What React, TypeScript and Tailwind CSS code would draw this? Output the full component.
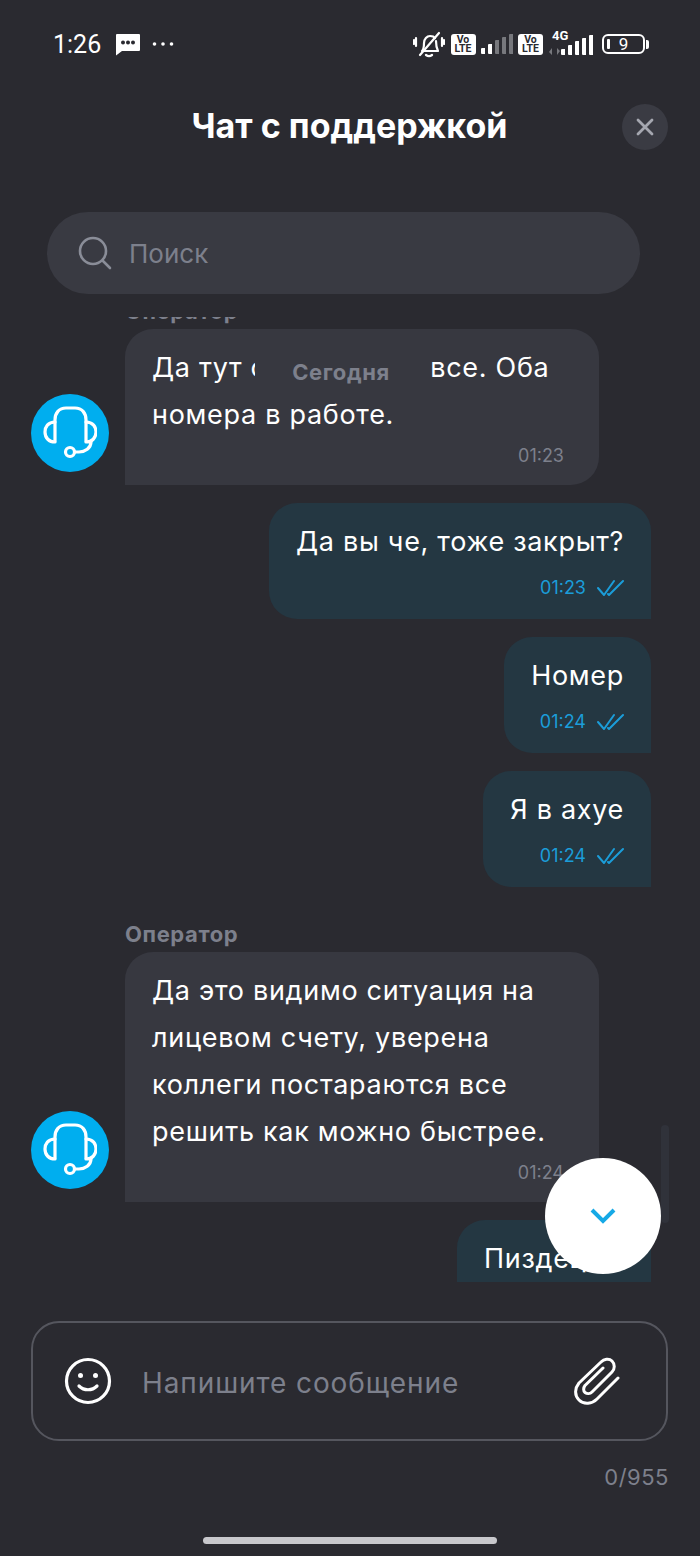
const fontMain = "font-['Inter','Noto_Sans',sans-serif]";

const HeadsetIcon = () => (
    <svg width="54" height="54" viewBox="0 0 54 54" fill="none" stroke="white" strokeWidth="3.200" strokeLinecap="round" strokeLinejoin="round">
        <path d="M12 35V14C12 7 16 2 23 2H32C39 2 43 7 43 14V35" />
        <path d="M12 16C5 16 2 21 2 26C2 32 6 36 12 36" />
        <path d="M43 16C50 16 53 21 53 26C53 32 49 36 43 36" />
        <path d="M48 36C48 42 42 46 36 46H32" />
        <circle cx="27" cy="46" r="4.500" />
    </svg>
);

const DoubleCheck = () => (
    <svg width="27" height="18" viewBox="0 0 27 18" fill="none" stroke="#1b9dd9" strokeWidth="2" strokeLinecap="round" strokeLinejoin="round">
        <path d="M1 9l6 7L17 2" />
        <path d="M11 15l1 1L26 2" />
    </svg>
);

const VoLte = () => (
    <div className="flex h-[21px] w-[25px] flex-col items-center justify-center rounded-[3px] bg-white font-['Roboto',sans-serif] text-[10.500px] leading-[9.500px] font-bold text-[#2a2a30]">
        <span>Vo</span>
        <span>LTE</span>
    </div>
);

const SignalBars = ({ active, dim }: { active: number; dim: string }) => {
    const heights = [6, 10, 14, 17, 20];
    return (
        <div className="flex items-end gap-[2.500px]">
            {heights.map((h, i) => (
                <svg key={i} width="4.500" height={h} viewBox={`0 0 4.500 ${h}`}>
                    <rect width="4.500" height={h} rx="1" fill={i < active ? "white" : dim} />
                </svg>
            ))}
        </div>
    );
};

const StatusBar = () => (
    <div className="flex h-[88px] items-center justify-between pr-[51px] pl-[53px]">
        <div className="flex items-center">
            <span className="font-['Roboto',sans-serif] text-[25px] leading-none text-white">1:26</span>
            <svg className="ml-[15px]" width="24" height="23" viewBox="0 0 24 23">
                <path d="M1 1h22a1 1 0 0 1 1 1v15a1 1 0 0 1-1 1H6l-6 4.500V2a1 1 0 0 1 1-1z" fill="white" />
                <circle cx="7" cy="9.500" r="2" fill="#2a2a30" />
                <circle cx="12" cy="9.500" r="2" fill="#2a2a30" />
                <circle cx="17" cy="9.500" r="2" fill="#2a2a30" />
            </svg>
            <svg className="ml-[12px]" width="22" height="6" viewBox="0 0 22 6" fill="white">
                <circle cx="2.500" cy="3" r="1.800" />
                <circle cx="11" cy="3" r="1.800" />
                <circle cx="19.500" cy="3" r="1.800" />
            </svg>
        </div>
        <div className="flex items-center">
            <svg width="32" height="28" viewBox="0 0 32 28" fill="none" stroke="white" strokeWidth="2.200" strokeLinecap="round" strokeLinejoin="round">
                <path d="M9 21c2-2 2-5 2-8 0-4 3-7 6-7 2 0 4 .5 5 2" />
                <path d="M23 11c0 4 .5 7 2 10H10" />
                <path d="M13 25c2 1.500 4 1.500 6 0" />
                <path d="M7 25L26 3" />
                <path d="M3 8v8M1 10v4M29 8v8M31 10v4" />
            </svg>
            <div className="ml-[6px]"><VoLte /></div>
            <div className="ml-[5px]"><SignalBars active={2} dim="#77787d" /></div>
            <div className="ml-[5px]"><VoLte /></div>
            <div className="relative ml-[6px] flex h-[22px] w-[44px] items-end justify-end">
                <span className="absolute top-[-3px] left-[3px] font-['Roboto',sans-serif] text-[13px] leading-[12px] font-bold text-white">4G</span>
                <svg className="absolute bottom-0 left-0" width="12" height="7" viewBox="0 0 12 7" fill="#77787d">
                    <path d="M3 0v7L0 4zM8 7V0l3 3z" />
                </svg>
                <SignalBars active={5} dim="#77787d" />
            </div>
            <div className="ml-[9px] flex items-center">
                <div className="relative flex h-[20px] w-[43px] items-center justify-center rounded-[6px] border-2 border-white font-['Roboto',sans-serif] text-[17px] leading-none text-white">
                    <div className="absolute top-[3px] bottom-[3px] left-[3px] w-[3px] rounded-[1px] bg-white" />
                    9
                </div>
                <div className="ml-[1px] h-[9px] w-[3px] rounded-r-[2px] bg-white" />
            </div>
        </div>
    </div>
);

const Header = () => (
    <div className="relative flex h-[78px] items-center justify-center pb-[2px]">
        <h1 className="pr-[1px] text-[34px] leading-none font-bold text-white">Чат с поддержкой</h1>
        <div className="absolute top-[16px] left-[622px] flex h-[46px] w-[46px] items-center justify-center rounded-full bg-[#3a3b43]">
            <svg width="18" height="18" viewBox="0 0 18 18" stroke="#a5a7b0" strokeWidth="2.800" strokeLinecap="round">
                <path d="M2 2l14 14M16 2L2 16" />
            </svg>
        </div>
    </div>
);

const SearchBar = () => (
    <div className="mt-[46px] ml-[47px] flex h-[82px] w-[593px] items-center rounded-[41px] bg-[#393a42] pl-[31px]">
        <svg width="34" height="34" viewBox="0 0 34 34" fill="none" stroke="#8a8d98" strokeWidth="2.600" strokeLinecap="round">
            <circle cx="15" cy="15" r="13" />
            <path d="M25 25l7 7" />
        </svg>
        <span className="ml-[17px] text-[26px] text-[#7d808c]">Поиск</span>
    </div>
);

const OperatorMsg = ({ lines, time }: { lines: string[]; time: string }) => (
    <div className="flex items-end pl-[31px]">
        <div className="mb-[13px] flex h-[78px] w-[78px] shrink-0 items-center justify-center rounded-full bg-[#00aeef]">
            <HeadsetIcon />
        </div>
        <div className="ml-[16px] w-[474px] rounded-t-[28px] rounded-br-[28px] bg-[#373840] pt-[15px] pr-[35px] pb-[17px] pl-[27px]">
            {lines.map((line, i) => (
                <p key={i} className="text-[27px] leading-[47px] tracking-[0.7px] whitespace-nowrap text-white">{line}</p>
            ))}
            <p className="mt-[6px] text-right text-[18px] leading-[24px] text-[#7d808c]">{time}</p>
        </div>
    </div>
);

const UserMsg = ({ text, time, wide }: { text: string; time: string; wide?: boolean }) => (
    <div className="flex justify-end pr-[49px]">
        <div className={`${wide ? "w-[194px]" : "w-fit"} rounded-t-[28px] rounded-bl-[28px] bg-[#243742] pt-[15px] pr-[27px] pb-[19px] pl-[27px]`}>
            <p className="text-[27px] leading-[47px] tracking-[0.7px] whitespace-nowrap text-white">{text}</p>
            <div className="mt-[11px] flex h-[24px] items-center justify-end gap-[11px]">
                <span className="text-[18px] leading-[24px] text-[#1b9dd9]">{time}</span>
                <DoubleCheck />
            </div>
        </div>
    </div>
);

const OperatorLabel = ({ className }: { className: string }) => (
    <p className={`${className} mb-[8px] pl-[125px] text-[22px] leading-[20px] font-bold tracking-[0.6px] text-[#7d808c]`}>Оператор</p>
);

const Messages = () => (
    <div className="relative mt-[23px] h-[965px] overflow-hidden">
        <OperatorLabel className="-mt-[16px]" />
        <OperatorMsg lines={["Да тут смотрю уже все. Оба", "номера в работе."]} time="01:23" />
        <div className="mt-[18px] flex flex-col gap-[18px]">
            <UserMsg text="Да вы че, тоже закрыт?" time="01:23" />
            <UserMsg text="Номер" time="01:24" />
            <UserMsg text="Я в ахуе" time="01:24" />
        </div>
        <OperatorLabel className="mt-[37px]" />
        <OperatorMsg
            lines={["Да это видимо ситуация на", "лицевом счету, уверена", "коллеги постараются все", "решить как можно быстрее."]}
            time="01:24"
        />
        <div className="mt-[18px]">
            <UserMsg text="Пиздец" time="01:25" wide />
        </div>
        <div className="absolute top-[32px] left-[255px] flex h-[46px] w-[172px] items-center justify-center bg-[#373840] text-[22px] font-bold tracking-[0.6px] text-[#7d808c]">
            Сегодня
        </div>
    </div>
);

const Composer = () => (
    <div className="mt-[39px] ml-[31px] flex h-[120px] w-[637px] items-center rounded-[28px] border-2 border-[#55565e] pr-[46px] pl-[31px]">
        <svg width="48" height="48" viewBox="0 0 48 48" fill="none" stroke="white" strokeWidth="3.200" strokeLinecap="round">
            <circle cx="24" cy="24" r="21.500" />
            <path d="M15 29c5 5 13 5 18 0" />
            <circle cx="16.500" cy="18.500" r="2.500" fill="white" stroke="none" />
            <circle cx="31.500" cy="18.500" r="2.500" fill="white" stroke="none" />
        </svg>
        <span className="ml-[30px] flex-1 pt-[3px] text-[28px] tracking-[0.9px] text-[#7d808c]">Напишите сообщение</span>
        <svg width="46" height="48" viewBox="0 0 46 48" fill="none" stroke="white" strokeWidth="3" strokeLinecap="round" strokeLinejoin="round">
            <path d="M44 21L23 42c-5 5-13 6-18 1s-4-12 0-17L27 5c3-3 8-4 11-1s3 8 0 11L18 35c-2 2-5 2-7 .5s-1.500-5 0-7L29 11" />
        </svg>
    </div>
);

export default function App() {
    return (
        <div className={`${fontMain} relative h-[1556px] w-[700px] overflow-hidden bg-[#2a2a30]`}>
            <StatusBar />
            <Header />
            <SearchBar />
            <Messages />
            <Composer />
            <p className="mt-[22px] pr-[31px] text-right text-[22px] leading-[28px] tracking-[0.5px] text-[#7d808c]">0/955</p>
            <div className="mx-auto mt-[46px] h-[7px] w-[294px] rounded-full bg-[#c8c8cc]" />

            <div className="absolute top-[1125px] left-[661px] h-[98px] w-[8px] rounded-full bg-[#30323a]" />
            <div className="absolute top-[1158px] left-[545px] flex h-[116px] w-[116px] items-center justify-center rounded-full bg-white">
                <svg width="26" height="16" viewBox="0 0 26 16" fill="none" stroke="#16a9e6" strokeWidth="4" strokeLinejoin="miter">
                    <path d="M2 2l11 11L24 2" />
                </svg>
            </div>
        </div>
    );
}
